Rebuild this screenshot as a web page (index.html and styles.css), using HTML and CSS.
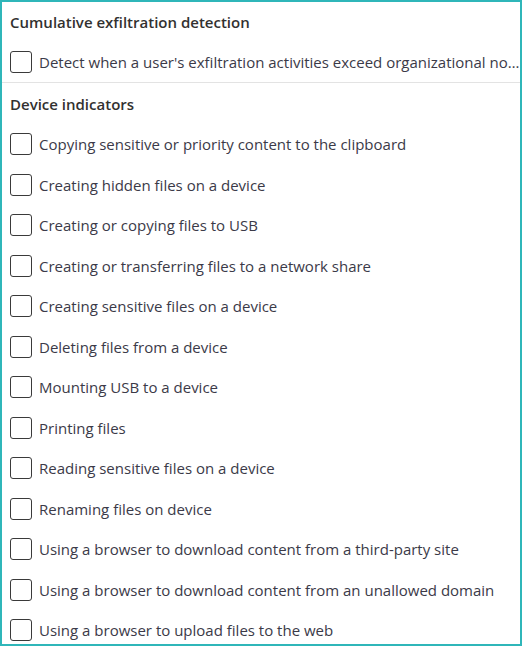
FILE: index.html
```html
<!DOCTYPE html>
<html>
<head>
<meta charset="utf-8">
<link rel="stylesheet" href="styles.css">
</head>
<body>
<div class="panel">
  <section class="group first">
    <div class="heading">Cumulative exfiltration detection</div>
    <label class="row"><span class="box"></span><span class="text">Detect when a user's exfiltration activities exceed organizational no…</span></label>
  </section>
  <section class="group">
    <div class="heading">Device indicators</div>
    <label class="row"><span class="box"></span><span class="text">Copying sensitive or priority content to the clipboard</span></label>
    <label class="row"><span class="box"></span><span class="text">Creating hidden files on a device</span></label>
    <label class="row"><span class="box"></span><span class="text">Creating or copying files to USB</span></label>
    <label class="row"><span class="box"></span><span class="text">Creating or transferring files to a network share</span></label>
    <label class="row"><span class="box"></span><span class="text">Creating sensitive files on a device</span></label>
    <label class="row"><span class="box"></span><span class="text">Deleting files from a device</span></label>
    <label class="row"><span class="box"></span><span class="text">Mounting USB to a device</span></label>
    <label class="row"><span class="box"></span><span class="text">Printing files</span></label>
    <label class="row"><span class="box"></span><span class="text">Reading sensitive files on a device</span></label>
    <label class="row"><span class="box"></span><span class="text">Renaming files on device</span></label>
    <label class="row"><span class="box"></span><span class="text">Using a browser to download content from a third-party site</span></label>
    <label class="row"><span class="box"></span><span class="text">Using a browser to download content from an unallowed domain</span></label>
    <label class="row"><span class="box"></span><span class="text">Using a browser to upload files to the web</span></label>
  </section>
</div>
</body>
</html>
```
FILE: styles.css
```css
html, body {
  margin: 0;
  padding: 0;
  background: #ffffff;
}
body {
  font-family: "Open Sans", "Noto Sans", sans-serif;
  color: #323130;
}
.panel {
  box-sizing: border-box;
  width: 522px;
  height: 646px;
  border: 2px solid #2fb6b9;
  overflow: hidden;
}
.group.first {
  border-bottom: 1px solid #e3e3e3;
}
.heading {
  height: 41px;
  display: flex;
  align-items: center;
  padding-left: 8px;
  font-size: 15px;
  font-weight: 600;
  color: #323130;
}
.group.first .heading {
  height: 39px;
}
.row {
  height: 40.5px;
  display: flex;
  align-items: center;
  padding-left: 8px;
  gap: 7px;
  font-size: 15px;
  color: #3b3a48;
}
.group.first .row {
  height: 41px;
}
.box {
  flex: none;
  box-sizing: border-box;
  width: 22px;
  height: 22px;
  border: 1.5px solid #3a3a3a;
  border-radius: 3px;
}
.text {
  white-space: nowrap;
}
```
